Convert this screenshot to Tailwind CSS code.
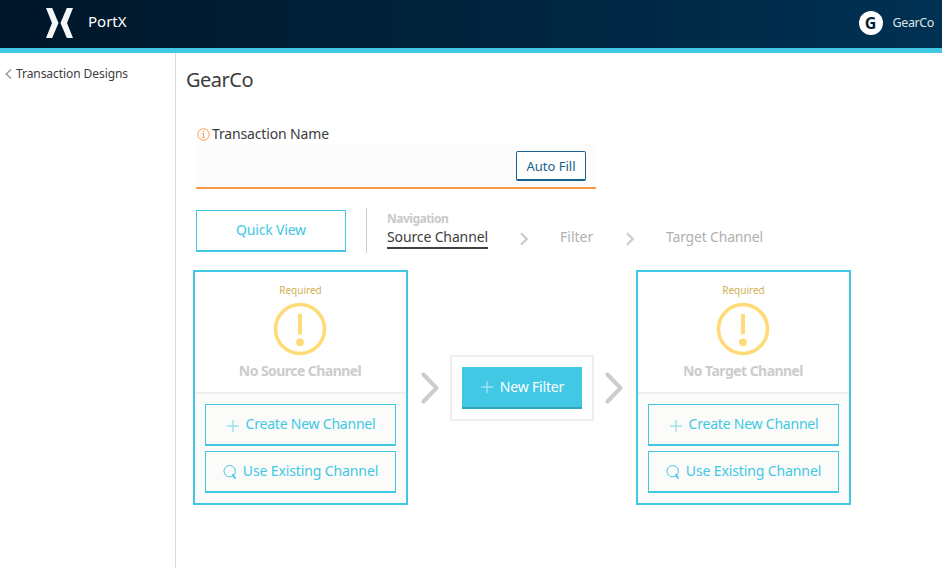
<!DOCTYPE html>
<html lang="en">
<head>
<meta charset="utf-8">
<title>PortX</title>
<script src="https://cdn.jsdelivr.net/npm/@tailwindcss/browser@4"></script>
</head>
<body class="flex h-[568px] w-[942px] flex-col overflow-hidden bg-white font-['Noto_Sans',sans-serif] text-sm text-[#3c3c3c]">
<svg class="hidden">
  <symbol id="plus" viewBox="0 0 14 14"><path d="M7 1v12M1 7h12" stroke="currentColor" stroke-width="1.4" fill="none"/></symbol>
  <symbol id="search" viewBox="0 0 14 16"><circle cx="6.7" cy="7.2" r="5.7" stroke="currentColor" stroke-width="1" fill="none"/><path d="M9.8 10.8L12 14" stroke="currentColor" stroke-width="1.7" stroke-linecap="round"/></symbol>
  <symbol id="alert" viewBox="0 0 54 54"><circle cx="27" cy="27" r="24.5" stroke="currentColor" stroke-width="3.6" fill="none"/><path d="M27 12v20.500" stroke="currentColor" stroke-width="4"/><circle cx="27" cy="40.300" r="3.900" fill="currentColor"/></symbol>
  <symbol id="chevron" viewBox="0 0 18 32"><path d="M2.500 2.500L15.500 16L2.500 29.500" stroke="currentColor" stroke-width="4" stroke-linecap="round" stroke-linejoin="round" fill="none"/></symbol>
  <symbol id="step" viewBox="0 0 8 14"><path d="M1 1.200L6.800 7L1 12.800" stroke="currentColor" stroke-width="2" fill="none"/></symbol>
</svg>

<header class="flex h-[53px] shrink-0 items-start border-b-[5px] border-[#40c8e5] bg-linear-to-r from-[#001629] to-[#003153] text-white">
  <svg class="mt-2 ml-[46px] h-[30px] w-[27px]" viewBox="0 0 27 30" fill="#f5f8fa"><path d="M0 0h6.200l6.300 15L6.200 30H0l6-15zM27 0h-6.200l-6.300 15L20.800 30H27l-6-15z"/></svg>
  <span class="mt-[11px] ml-[15px] text-[15px] leading-5">PortX</span>
  <span class="mt-[11px] ml-auto flex size-6 items-center justify-center rounded-full bg-white text-base leading-6 font-bold text-[#012038]">G</span>
  <span class="mt-[13px] mr-[8px] ml-[10px] text-[12.500px] leading-5 tracking-[-0.400px] text-[#dbe4ea]">GearCo</span>
</header>

<div class="flex min-h-0 flex-1">
  <aside class="w-[176px] shrink-0 border-r border-[#dcdcdc]">
    <a class="mt-[11px] ml-[5px] flex items-center text-xs leading-5 tracking-[-0.070px]">
      <svg class="mr-1 h-[10px] w-[7px] text-[#999]" viewBox="0 0 7 10"><path d="M6 .5L1.200 5L6 9.500" stroke="currentColor" stroke-width="1.500" fill="none"/></svg>Transaction Designs
    </a>
  </aside>

  <main class="flex-1">
    <h1 class="mt-[13px] ml-[10px] text-[20px] leading-7 tracking-[-0.500px]">GearCo</h1>

    <div class="mt-[30px] ml-5 w-[400px]">
      <label class="flex h-5 items-center leading-5 tracking-[-0.150px]">
        <svg class="mt-px mr-[2px] ml-[1px] size-[13px] text-[#f89c4d]" viewBox="0 0 13 13" fill="none" stroke="currentColor"><circle cx="6.500" cy="6.500" r="5.700"/><path d="M6.500 5.300v4.200M5.300 5.500h1.200M5.200 9.500h2.600"/><path d="M6.500 2.900v1.300" stroke-width="1.200"/></svg>Transaction Name
      </label>
      <div class="flex h-[45px] justify-end border-b-2 border-[#f89a45] bg-[#fcfcfc] pt-[7px] pr-[10px]">
        <button class="h-[30px] w-[70px] rounded-[2px] border border-b-2 border-[#17628f] bg-white text-[13px] leading-[26px] text-[#17628f]">Auto Fill</button>
      </div>
    </div>

    <div class="mt-[19px] ml-5 flex h-[45px] items-start">
      <button class="mt-[2px] h-[42px] w-[150px] border border-b-2 border-[#40c8e5] pb-[2px] leading-[37px] tracking-[-0.190px] text-[#40c8e5]">Quick View</button>
      <div class="ml-5 h-[45px] w-px bg-[#ccc]"></div>
      <div class="ml-5">
        <div class="mt-[2px] h-[17px] text-xs leading-[17px] font-bold tracking-[-0.500px] text-[#c9c9c9]">Navigation</div>
        <div class="flex items-start">
          <span class="h-[22px] w-[101px] border-b-2 border-[#404040] leading-[19px] tracking-[-0.130px] whitespace-nowrap">Source Channel</span>
          <svg class="mt-[5px] ml-8 h-[14px] w-2 text-[#c9c9c9]"><use href="#step"/></svg>
          <span class="ml-8 w-[33px] leading-[19px] text-[#b0b0b0]">Filter</span>
          <svg class="mt-[5px] ml-[33px] h-[14px] w-2 text-[#c9c9c9]"><use href="#step"/></svg>
          <span class="ml-8 leading-[19px] tracking-[-0.190px] text-[#b0b0b0]">Target Channel</span>
        </div>
      </div>
    </div>

    <div class="mt-[17px] ml-[17px] flex h-[235px] items-center">
      <section class="flex h-[235px] w-[215px] flex-col border-2 border-[#40c8e5]">
        <div class="flex h-[122px] flex-col items-center border-b-2 border-[#eee]">
          <span class="mt-[11px] text-[10px] leading-[15px] text-[#d0b052]">Required</span>
          <svg class="mt-[4px] mr-px size-[54px] text-[#ffdb78]"><use href="#alert"/></svg>
          <span class="mt-[5px] mr-px leading-5 font-bold tracking-[-0.550px] text-[#ccc]">No Source Channel</span>
        </div>
        <div class="flex flex-1 flex-col gap-[5px] bg-[#fbfcfa] px-[10px] pt-[10px] text-[#40c8e5]">
          <button class="flex h-[42px] items-center justify-center border border-b-2 border-current pb-px leading-5"><svg class="mt-[3px] mr-[6px] size-[14px] opacity-50"><use href="#plus"/></svg><span class="tracking-[-0.220px]">Create New Channel</span></button>
          <button class="flex h-[42px] items-center justify-center border border-b-2 border-current pb-px leading-5"><svg class="mt-px mr-[6px] h-4 w-[14px]"><use href="#search"/></svg><span class="tracking-[-0.120px]">Use Existing Channel</span></button>
        </div>
      </section>

      <svg class="ml-[13px] h-8 w-[18px] text-[#ccc]"><use href="#chevron"/></svg>
      <div class="ml-[11px] h-[66px] w-[144px] border-2 border-[#eee] p-[10px]">
        <button class="flex h-[42px] w-[120px] items-center justify-center border-b-2 border-[#33a1b8] bg-[#40c8e5] leading-5 text-white"><svg class="mr-[6px] size-[14px] opacity-50"><use href="#plus"/></svg><span class="tracking-[-0.180px]">New Filter</span></button>
      </div>
      <svg class="ml-[11px] h-8 w-[18px] text-[#ccc]"><use href="#chevron"/></svg>

      <section class="ml-[13px] flex h-[235px] w-[215px] flex-col border-2 border-[#40c8e5]">
        <div class="flex h-[122px] flex-col items-center border-b-2 border-[#eee]">
          <span class="mt-[11px] text-[10px] leading-[15px] text-[#d0b052]">Required</span>
          <svg class="mt-[4px] mr-px size-[54px] text-[#ffdb78]"><use href="#alert"/></svg>
          <span class="mt-[5px] mr-px leading-5 font-bold tracking-[-0.550px] text-[#ccc]">No Target Channel</span>
        </div>
        <div class="flex flex-1 flex-col gap-[5px] bg-[#fbfcfa] px-[10px] pt-[10px] text-[#40c8e5]">
          <button class="flex h-[42px] items-center justify-center border border-b-2 border-current pb-px leading-5"><svg class="mt-[3px] mr-[6px] size-[14px] opacity-50"><use href="#plus"/></svg><span class="tracking-[-0.220px]">Create New Channel</span></button>
          <button class="flex h-[42px] items-center justify-center border border-b-2 border-current pb-px leading-5"><svg class="mt-px mr-[6px] h-4 w-[14px]"><use href="#search"/></svg><span class="tracking-[-0.120px]">Use Existing Channel</span></button>
        </div>
      </section>
    </div>
  </main>
</div>
</body>
</html>
